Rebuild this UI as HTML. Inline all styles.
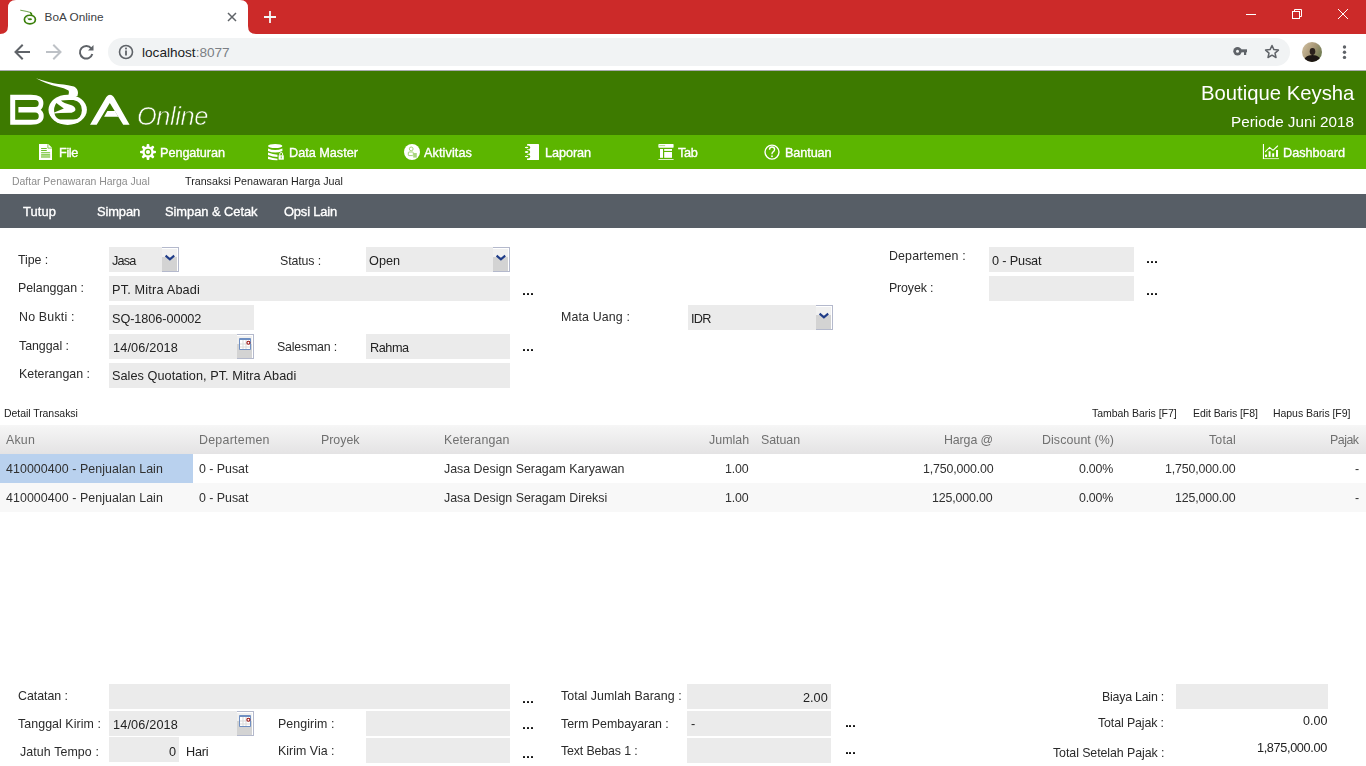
<!DOCTYPE html>
<html><head><meta charset="utf-8">
<style>
*{margin:0;padding:0;box-sizing:border-box}
html,body{width:1366px;height:766px;overflow:hidden;background:#fff;position:relative}
body{font-family:"Liberation Sans",sans-serif}
.a{position:absolute}
.t{position:absolute;white-space:nowrap;line-height:1;font-family:"Liberation Sans",sans-serif;will-change:transform}
svg{display:block}
</style></head><body>
<div class="a" style="left:0px;top:0px;width:1366px;height:34px;background:#CC2A29;"></div>
<svg class="a" style="left:0;top:0" width="290" height="34" viewBox="0 0 290 34">
<path d="M0 34 Q8 34 8 26 L8 8 Q8 0 16 0 L240 0 Q248 0 248 8 L248 26 Q248 34 256 34 Z" fill="#fff"/>
<ellipse cx="29.9" cy="19.6" rx="5.5" ry="4.35" fill="none" stroke="#3A7F0A" stroke-width="1.7"/>
<path d="M20.3 10.2 Q27 11.3 30.2 12.4 Q31.9 13.2 31.6 15.4" fill="none" stroke="#3A7F0A" stroke-width="1" opacity="0.75"/>
<path d="M30.2 12.6 Q31.9 13.3 31.6 15.6" fill="none" stroke="#3A7F0A" stroke-width="1.6"/>
<ellipse cx="30" cy="19.3" rx="2" ry="1" fill="#3A7F0A"/>
<path d="M26.5 17.3 L29 19" stroke="#3A7F0A" stroke-width="0.8" opacity="0.6"/>
<g stroke="#5F6368" stroke-width="1.5" stroke-linecap="butt"><path d="M228 13 L236 21 M236 13 L228 21"/></g>
<g stroke="#F4F8F8" stroke-width="1.8"><path d="M270 11 L270 23 M264 17 L276 17"/></g>
</svg>
<div class="t" style="left:44.60px;top:11px;font-size:11.79px;color:#3C4043;will-change:auto;">BoA Online</div>
<svg class="a" style="left:1240px;top:0" width="126" height="34">
<g stroke="#fff" stroke-width="1" fill="none">
<path d="M6 14.5 H16"/>
<rect x="52.5" y="11.5" width="7" height="7"/>
<path d="M54.5 11.5 V9.5 H61.5 V16.5 H59.5"/>
<path d="M98 9 L108 19 M108 9 L98 19"/>
</g></svg>
<div class="a" style="left:0px;top:34px;width:1366px;height:36px;background:#fff;"></div>
<div class="a" style="left:108px;top:38px;width:1182px;height:28px;background:#F1F3F4;border-radius:14px;"></div>
<svg class="a" style="left:0;top:34px" width="140" height="36">
<g stroke="#5F6368" stroke-width="2" fill="none" stroke-linecap="square">
<path d="M29 18 H17 M22 11.5 L15.5 18 L22 24.5"/>
</g>
<g stroke="#BDC1C6" stroke-width="2" fill="none" stroke-linecap="square">
<path d="M47 18 H59 M54 11.5 L60.5 18 L54 24.5"/>
</g>
<g fill="none" stroke="#5F6368" stroke-width="2">
<path d="M91.3 14.5 A6.3 6.3 0 1 0 92.3 20"/>
</g>
<path d="M93.5 11 V16.5 H88 Z" fill="#5F6368"/>
<circle cx="126" cy="18" r="6.5" fill="none" stroke="#5F6368" stroke-width="1.6"/>
<rect x="125.1" y="16.5" width="1.8" height="5" fill="#5F6368"/>
<rect x="125.1" y="13.6" width="1.8" height="1.8" fill="#5F6368"/>
</svg>
<div class="t" style="left:142.00px;top:46px;font-size:13.6px;color:#202124;will-change:auto;">localhost</div>
<div class="t" style="left:195.67px;top:46px;font-size:13.6px;color:#7B7F85;will-change:auto;">:8077</div>
<svg class="a" style="left:1225px;top:34px" width="141" height="36">
<g fill="#5F6368">
<circle cx="12.5" cy="17.3" r="4.2"/>
<rect x="15" y="15.3" width="7" height="3"/>
<rect x="19" y="17" width="2.2" height="4"/>
</g>
<circle cx="12.5" cy="17.3" r="1.5" fill="#F1F3F4"/>
<path d="M47 11.5 L48.9 15.6 L53.4 16.1 L50 19.1 L51 23.5 L47 21.2 L43 23.5 L44 19.1 L40.6 16.1 L45.1 15.6 Z" fill="none" stroke="#5F6368" stroke-width="1.5" stroke-linejoin="round"/>
<defs><linearGradient id="av" x1="0" y1="0" x2="1" y2="0.6"><stop offset="0" stop-color="#D6C4A4"/><stop offset="0.55" stop-color="#A89878"/><stop offset="1" stop-color="#6E7A50"/></linearGradient>
<clipPath id="avc"><circle cx="87" cy="18" r="10"/></clipPath></defs>
<circle cx="87" cy="18" r="10" fill="url(#av)"/>
<g clip-path="url(#avc)">
<ellipse cx="87.5" cy="17.5" rx="2.8" ry="3.4" fill="#2A201C"/>
<path d="M78 30 Q79 22.5 84 21.5 Q87.5 20.5 91 21.5 Q96 23 97 30 Z" fill="#1C1614"/>
<path d="M92 9 Q96 12 97 17 L97 8 Z" fill="#6A7450" opacity="0.8"/>
</g>
<circle cx="119.5" cy="13" r="1.7" fill="#5F6368"/>
<circle cx="119.5" cy="18.3" r="1.7" fill="#5F6368"/>
<circle cx="119.5" cy="23.4" r="1.7" fill="#5F6368"/>
</svg>
<div class="a" style="left:0px;top:70px;width:1366px;height:65px;background:#3D7A00;"></div>
<div class="a" style="left:0px;top:70px;width:1366px;height:1px;background:#A9ABAE;"></div>
<svg class="a" style="left:0;top:70px" width="140" height="65" viewBox="0 70 140 65">
<g fill="#fff" fill-rule="evenodd">
<path d="M10.2 94.7 H30.8 Q43.4 94.7 43.4 103 Q43.4 107.5 40.7 109.8 Q43.7 112 43.7 116 Q43.7 124.7 30.8 124.7 H10.2 Z M15.2 99.9 H35.2 A3.5 3.5 0 0 1 35.2 106.9 H18.4 V112.6 H35.2 A3.55 3.55 0 0 1 35.2 119.7 H15.2 Z"/>
</g>
<g fill="#fff">
<ellipse cx="67.7" cy="109.8" rx="19.2" ry="15.1"/>
<path d="M36 78.3 Q50 83 58.2 83.9 Q70 85 74 86.5 Q78 88.5 78 93 L77.5 96 L68 96 Q69.5 92 68.5 90.5 Q64 87.8 58 86.8 Q46 84 36 78.3 Z"/>
<path d="M90 124.7 L106.3 96.9 Q110 92.5 113.8 96.9 L129.6 124.7 H123.2 L109.8 102.9 L96.7 124.7 Z"/>
<path d="M104.1 116.8 L107.3 111.1 H114.9 L118.3 116.8 Z"/>
</g>
<g fill="#3D7A00">
<path d="M56.3 103 L63.8 108.4 L54.2 112.6 Q53.4 107.5 56.3 103 Z"/>
<path d="M61 100.5 Q66 99.6 73.4 100 Q82 101.5 81.9 110.3 Q81.6 119.5 73.4 119.5 L60 119.5 Q55.8 118.5 54.4 113.6 Q58 112.7 71.6 112.7 Q75.6 111.8 75.4 109.3 Q75.1 106.5 71.6 105.2 Q63 103 61 100.5 Z"/>
</g>
</svg>
<div class="t" style="left:136.60px;top:104px;font-size:25.4px;color:#fff;font-style:italic;letter-spacing:-0.403px;-webkit-text-stroke:0.6px #3D7A00;">Online</div>
<div class="t" style="left:1201.27px;top:83px;font-size:20.29px;color:#fff;">Boutique Keysha</div>
<div class="t" style="left:1231.49px;top:114px;font-size:15.28px;color:#fff;">Periode Juni 2018</div>
<div class="a" style="left:0px;top:135px;width:1366px;height:34px;background:#5CB500;"></div>
<div class="t" style="left:58.70px;top:147px;font-size:12.7px;color:#fff;letter-spacing:-0.366px;-webkit-text-stroke:0.35px currentColor;">File</div>
<div class="t" style="left:160.30px;top:147px;font-size:12.7px;color:#fff;letter-spacing:-0.066px;-webkit-text-stroke:0.35px currentColor;">Pengaturan</div>
<div class="t" style="left:288.50px;top:147px;font-size:12.7px;color:#fff;letter-spacing:-0.015px;-webkit-text-stroke:0.35px currentColor;">Data Master</div>
<div class="t" style="left:424.40px;top:147px;font-size:12.7px;color:#fff;letter-spacing:0.080px;-webkit-text-stroke:0.35px currentColor;">Aktivitas</div>
<div class="t" style="left:545.00px;top:147px;font-size:12.7px;color:#fff;letter-spacing:-0.086px;-webkit-text-stroke:0.35px currentColor;">Laporan</div>
<div class="t" style="left:678.20px;top:147px;font-size:12.7px;color:#fff;letter-spacing:-0.325px;-webkit-text-stroke:0.35px currentColor;">Tab</div>
<div class="t" style="left:785.00px;top:147px;font-size:12.7px;color:#fff;letter-spacing:-0.116px;-webkit-text-stroke:0.35px currentColor;">Bantuan</div>
<div class="t" style="left:1283.00px;top:147px;font-size:12.7px;color:#fff;letter-spacing:-0.014px;-webkit-text-stroke:0.35px currentColor;">Dashboard</div>
<svg class="a" style="left:0;top:135px" width="1366" height="34" viewBox="0 135 1366 34">
<path d="M39 144 H48.2 L52 147.8 V160 H39 Z" fill="#fff"/>
<path d="M47.9 144.2 V148.1 H51.9" fill="none" stroke="#7CC640" stroke-width="0.9"/>
<g fill="#6BBE2A">
<rect x="41" y="147.9" width="5.9" height="1.1" rx="0.5"/><rect x="41" y="150" width="5.9" height="1.1" rx="0.5"/>
<rect x="41" y="152.2" width="9.2" height="1.1" rx="0.5"/><rect x="41" y="154.3" width="9.2" height="1.1" rx="0.5"/>
</g>
<rect x="41" y="155.5" width="9.2" height="2.4" fill="#A6D87C"/>
<g transform="translate(148,152)">
<g fill="#fff">
<circle r="5.7"/>
<rect x="-1.35" y="-8" width="2.7" height="16" rx="1"/>
<rect x="-1.35" y="-8" width="2.7" height="16" rx="1" transform="rotate(45)"/>
<rect x="-1.35" y="-8" width="2.7" height="16" rx="1" transform="rotate(90)"/>
<rect x="-1.35" y="-8" width="2.7" height="16" rx="1" transform="rotate(135)"/>
</g>
<circle r="2.7" fill="none" stroke="#5CB500" stroke-width="1.3"/>
</g>
<g fill="#fff">
<ellipse cx="275.2" cy="146" rx="7.2" ry="2.1"/>
<path d="M268 148.6 Q275.2 151.6 282.4 148.6 V150.9 Q275.2 153.9 268 150.9 Z"/>
<path d="M268 152.6 Q273 154.6 277.5 154.8 V157 Q273 157 268 155 Z"/>
<path d="M268 156.6 Q273 158.6 277.5 158.8 V160.3 Q273 160.5 268 159 Z"/>
<rect x="278.6" y="155.3" width="5.2" height="4.4"/>
<path d="M279.8 155.5 V153.9 A1.4 1.4 0 0 1 282.6 153.9 V155.5" fill="none" stroke="#fff" stroke-width="1"/>
</g>
<rect x="280.7" y="156.4" width="1.1" height="2" fill="#7CC640"/>
<circle cx="412" cy="152" r="8" fill="#fff"/>
<g fill="none" stroke="#A2D374" stroke-width="1"><circle cx="411.2" cy="148.9" r="1.9"/><rect x="408.3" y="152" width="5" height="3.6" rx="0.8"/></g><rect x="413.2" y="153" width="3.6" height="4.6" fill="#A8D67F"/>
<rect x="527" y="144" width="12" height="16" rx="0.6" fill="#fff"/>
<g fill="#5CB500"><ellipse cx="527.8" cy="147.4" rx="2.4" ry="2"/><ellipse cx="527.8" cy="152" rx="2.4" ry="2"/><ellipse cx="527.8" cy="156.6" rx="2.4" ry="2"/></g>
<g fill="#fff"><ellipse cx="526.6" cy="147.4" rx="1.8" ry="0.75"/><ellipse cx="526.6" cy="152" rx="1.8" ry="0.9"/><ellipse cx="526.6" cy="156.6" rx="1.8" ry="0.75"/></g>
<g fill="#fff">
<rect x="658.4" y="144.1" width="15.2" height="3.6" rx="0.6"/>
<rect x="660" y="149" width="3" height="8.8"/>
<rect x="664.2" y="149" width="7.8" height="1.9"/>
<rect x="664.2" y="152" width="7.8" height="5.8"/>
<rect x="658.5" y="159" width="15.1" height="1" opacity="0.8"/>
</g>
<rect x="659.3" y="145.3" width="5.8" height="0.8" fill="#9CD36A"/>
<circle cx="772" cy="152.1" r="7" fill="none" stroke="#fff" stroke-width="1.4"/>
<path d="M769.5 149.8 Q769.5 147 772 147 Q774.6 147 774.6 149.6 Q774.6 151.2 772.6 152.3 Q772 152.8 772 154.2" fill="none" stroke="#fff" stroke-width="1.4"/>
<rect x="771.2" y="155.5" width="1.6" height="1.6" fill="#fff"/>
<g fill="#fff">
<rect x="1262.9" y="144" width="1.1" height="15"/><rect x="1262.9" y="158.1" width="16" height="1" opacity="0.75"/>
<rect x="1265" y="154.4" width="2.1" height="2.5" rx="0.6"/><rect x="1268.6" y="151.3" width="2" height="5.6"/><rect x="1272.2" y="153.3" width="2" height="3.6"/><rect x="1276" y="150" width="2" height="6.9"/>
</g>
<path d="M1265.4 151.6 L1269.6 147.4 L1273 150.3 L1277.6 146" fill="none" stroke="#fff" stroke-width="1.1" stroke-linecap="round"/>
</svg>
<div class="a" style="left:0px;top:169px;width:1366px;height:25px;background:#fff;"></div>
<div class="t" style="left:11.90px;top:177px;font-size:10.46px;color:#8C8C8C;">Daftar Penawaran Harga Jual</div>
<div class="t" style="left:185.30px;top:176px;font-size:10.71px;color:#1E1E1E;">Transaksi Penawaran Harga Jual</div>
<div class="a" style="left:0px;top:194px;width:1366px;height:34px;background:#575E66;"></div>
<div class="t" style="left:23.20px;top:206px;font-size:12.9px;color:#fff;letter-spacing:0.099px;-webkit-text-stroke:0.35px currentColor;">Tutup</div>
<div class="t" style="left:96.70px;top:206px;font-size:12.9px;color:#fff;letter-spacing:-0.123px;-webkit-text-stroke:0.35px currentColor;">Simpan</div>
<div class="t" style="left:165.30px;top:206px;font-size:12.9px;color:#fff;letter-spacing:-0.050px;-webkit-text-stroke:0.35px currentColor;">Simpan &amp; Cetak</div>
<div class="t" style="left:283.90px;top:206px;font-size:12.9px;color:#fff;letter-spacing:-0.166px;-webkit-text-stroke:0.35px currentColor;">Opsi Lain</div>
<div class="a" style="left:109px;top:247px;width:69px;height:25px;background:#EBEBEB;"></div>
<svg class="a" style="left:162px;top:247px" width="17" height="25" viewBox="0 0 17 25" preserveAspectRatio="none">
<rect x="0" y="0" width="17" height="25" fill="#B4B9CC"/>
<rect x="0" y="1" width="16" height="23" fill="#FFFFFF"/>
<rect x="0" y="2" width="15" height="8" fill="#F0F0F0"/>
<rect x="0" y="10" width="15" height="14" fill="#D3D3D3"/>
<path d="M3.6 8.6 L7.9 12.3 L12.2 8.6" fill="none" stroke="#1F3C88" stroke-width="2.1"/>
</svg>
<div class="t" style="left:18.30px;top:254px;font-size:12.4px;color:#2B2B2B;letter-spacing:-0.092px;">Tipe :</div>
<div class="t" style="left:112.00px;top:255px;font-size:12.7px;color:#222222;letter-spacing:-0.800px;">Jasa</div>
<div class="a" style="left:366px;top:247px;width:144px;height:25px;background:#EBEBEB;"></div>
<svg class="a" style="left:493px;top:247px" width="17" height="25" viewBox="0 0 17 25" preserveAspectRatio="none">
<rect x="0" y="0" width="17" height="25" fill="#B4B9CC"/>
<rect x="0" y="1" width="16" height="23" fill="#FFFFFF"/>
<rect x="0" y="2" width="15" height="8" fill="#F0F0F0"/>
<rect x="0" y="10" width="15" height="14" fill="#D3D3D3"/>
<path d="M3.6 8.6 L7.9 12.3 L12.2 8.6" fill="none" stroke="#1F3C88" stroke-width="2.1"/>
</svg>
<div class="t" style="left:280.00px;top:255px;font-size:12.4px;color:#2B2B2B;letter-spacing:-0.130px;">Status :</div>
<div class="t" style="left:369.20px;top:255px;font-size:12.7px;color:#222222;letter-spacing:0.034px;">Open</div>
<div class="a" style="left:109px;top:276px;width:401px;height:25px;background:#EBEBEB;"></div>
<div class="t" style="left:18.30px;top:282px;font-size:12.4px;color:#2B2B2B;letter-spacing:-0.026px;">Pelanggan :</div>
<div class="t" style="left:111.80px;top:284px;font-size:12.7px;color:#222222;letter-spacing:0.186px;">PT. Mitra Abadi</div>
<div class="a" style="left:523.4px;top:293px;width:2px;height:2px;background:#111;border-radius:0.6px;"></div>
<div class="a" style="left:527.0px;top:293px;width:2px;height:2px;background:#111;border-radius:0.6px;"></div>
<div class="a" style="left:530.6px;top:293px;width:2px;height:2px;background:#111;border-radius:0.6px;"></div>
<div class="a" style="left:109px;top:305px;width:145px;height:25px;background:#EBEBEB;"></div>
<div class="t" style="left:18.50px;top:311px;font-size:12.4px;color:#2B2B2B;letter-spacing:0.195px;">No Bukti :</div>
<div class="t" style="left:112.30px;top:313px;font-size:12.7px;color:#222222;letter-spacing:-0.074px;">SQ-1806-00002</div>
<div class="a" style="left:109px;top:334px;width:145px;height:25px;background:#EBEBEB;"></div>
<svg class="a" style="left:237px;top:334px" width="17" height="25" viewBox="0 0 17 25">
<rect x="0" y="0" width="17" height="25" fill="#B4B9CC"/>
<rect x="0" y="1" width="16" height="23" fill="#FFFFFF"/>
<rect x="0" y="2" width="15" height="8" fill="#F0F0F0"/>
<rect x="0" y="10" width="15" height="14" fill="#D3D3D3"/>
<rect x="2" y="4" width="12" height="12" fill="#6F8FC2" rx="1"/>
<rect x="3" y="6" width="10" height="9" fill="#FFFFFF"/>
<g fill="#DADADA"><rect x="5.5" y="6" width="1" height="9"/><rect x="8.5" y="6" width="1" height="9"/><rect x="3" y="9.5" width="10" height="1"/><rect x="3" y="12.5" width="10" height="1"/></g>
<circle cx="11.4" cy="8.8" r="1.5" fill="#fff" stroke="#9A1010" stroke-width="1.1"/>
</svg>
<div class="t" style="left:18.50px;top:340px;font-size:12.4px;color:#2B2B2B;letter-spacing:-0.036px;">Tanggal :</div>
<div class="t" style="left:112.90px;top:342px;font-size:12.7px;color:#222222;letter-spacing:0.154px;">14/06/2018</div>
<div class="a" style="left:366px;top:334px;width:144px;height:25px;background:#EBEBEB;"></div>
<div class="t" style="left:277.30px;top:341px;font-size:12.4px;color:#2B2B2B;letter-spacing:-0.203px;">Salesman :</div>
<div class="t" style="left:369.50px;top:342px;font-size:12.7px;color:#222222;letter-spacing:-0.448px;">Rahma</div>
<div class="a" style="left:523.4px;top:349px;width:2px;height:2px;background:#111;border-radius:0.6px;"></div>
<div class="a" style="left:527.0px;top:349px;width:2px;height:2px;background:#111;border-radius:0.6px;"></div>
<div class="a" style="left:530.6px;top:349px;width:2px;height:2px;background:#111;border-radius:0.6px;"></div>
<div class="a" style="left:109px;top:363px;width:401px;height:25px;background:#EBEBEB;"></div>
<div class="t" style="left:18.50px;top:368px;font-size:12.4px;color:#2B2B2B;">Keterangan :</div>
<div class="t" style="left:111.80px;top:370px;font-size:12.7px;color:#222222;letter-spacing:0.052px;">Sales Quotation, PT. Mitra Abadi</div>
<div class="a" style="left:688px;top:305px;width:145px;height:25px;background:#EBEBEB;"></div>
<svg class="a" style="left:816px;top:305px" width="17" height="25" viewBox="0 0 17 25" preserveAspectRatio="none">
<rect x="0" y="0" width="17" height="25" fill="#B4B9CC"/>
<rect x="0" y="1" width="16" height="23" fill="#FFFFFF"/>
<rect x="0" y="2" width="15" height="8" fill="#F0F0F0"/>
<rect x="0" y="10" width="15" height="14" fill="#D3D3D3"/>
<path d="M3.6 8.6 L7.9 12.3 L12.2 8.6" fill="none" stroke="#1F3C88" stroke-width="2.1"/>
</svg>
<div class="t" style="left:560.50px;top:311px;font-size:12.4px;color:#2B2B2B;letter-spacing:0.133px;">Mata Uang :</div>
<div class="t" style="left:691.20px;top:313px;font-size:12.7px;color:#222222;letter-spacing:-0.691px;">IDR</div>
<div class="a" style="left:989px;top:247px;width:145px;height:25px;background:#EBEBEB;"></div>
<div class="t" style="left:888.70px;top:250px;font-size:12.4px;color:#2B2B2B;letter-spacing:0.140px;">Departemen :</div>
<div class="t" style="left:992.30px;top:255px;font-size:12.7px;color:#222222;letter-spacing:-0.158px;">0 - Pusat</div>
<div class="a" style="left:1147.4px;top:261px;width:2px;height:2px;background:#111;border-radius:0.6px;"></div>
<div class="a" style="left:1151.0px;top:261px;width:2px;height:2px;background:#111;border-radius:0.6px;"></div>
<div class="a" style="left:1154.6px;top:261px;width:2px;height:2px;background:#111;border-radius:0.6px;"></div>
<div class="a" style="left:989px;top:276px;width:145px;height:25px;background:#EBEBEB;"></div>
<div class="t" style="left:888.70px;top:282px;font-size:12.4px;color:#2B2B2B;letter-spacing:-0.148px;">Proyek :</div>
<div class="a" style="left:1147.4px;top:293px;width:2px;height:2px;background:#111;border-radius:0.6px;"></div>
<div class="a" style="left:1151.0px;top:293px;width:2px;height:2px;background:#111;border-radius:0.6px;"></div>
<div class="a" style="left:1154.6px;top:293px;width:2px;height:2px;background:#111;border-radius:0.6px;"></div>
<div class="t" style="left:3.50px;top:408px;font-size:10.5px;color:#222;letter-spacing:-0.056px;">Detail Transaksi</div>
<div class="t" style="left:1092.40px;top:408px;font-size:10.5px;color:#222;letter-spacing:-0.035px;">Tambah Baris [F7]</div>
<div class="t" style="left:1193.00px;top:408px;font-size:10.5px;color:#222;letter-spacing:-0.076px;">Edit Baris [F8]</div>
<div class="t" style="left:1273.00px;top:408px;font-size:10.5px;color:#222;letter-spacing:-0.056px;">Hapus Baris [F9]</div>
<div class="a" style="left:0px;top:425px;width:1366px;height:29px;background:linear-gradient(#F6F6F6,#E4E3E4);"></div>
<div class="t" style="left:6.10px;top:434px;font-size:12.4px;color:#707070;letter-spacing:0.184px;">Akun</div>
<div class="t" style="left:199.40px;top:434px;font-size:12.4px;color:#707070;letter-spacing:0.257px;">Departemen</div>
<div class="t" style="left:321.20px;top:434px;font-size:12.4px;color:#707070;letter-spacing:-0.015px;">Proyek</div>
<div class="t" style="left:443.80px;top:434px;font-size:12.4px;color:#707070;letter-spacing:0.149px;">Keterangan</div>
<div class="t" style="left:708.95px;top:434px;font-size:12.4px;color:#707070;letter-spacing:0.038px;">Jumlah</div>
<div class="t" style="left:760.80px;top:434px;font-size:12.4px;color:#707070;letter-spacing:-0.050px;">Satuan</div>
<div class="t" style="left:943.98px;top:434px;font-size:12.4px;color:#707070;letter-spacing:-0.115px;">Harga @</div>
<div class="t" style="left:1041.77px;top:434px;font-size:12.4px;color:#707070;letter-spacing:0.086px;">Discount (%)</div>
<div class="t" style="left:1208.86px;top:434px;font-size:12.4px;color:#707070;letter-spacing:0.162px;">Total</div>
<div class="t" style="left:1330.45px;top:434px;font-size:12.4px;color:#707070;letter-spacing:-0.503px;">Pajak</div>
<div class="a" style="left:0px;top:454px;width:1366px;height:29px;background:#FFFFFF;"></div>
<div class="a" style="left:0px;top:454px;width:193px;height:29px;background:#B9D1EE;"></div>
<div class="a" style="left:0px;top:483px;width:1366px;height:29px;background:#F8F8F8;"></div>
<div class="t" style="left:6.10px;top:463px;font-size:12.4px;color:#303030;letter-spacing:0.072px;">410000400 - Penjualan Lain</div>
<div class="t" style="left:199.40px;top:463px;font-size:12.4px;color:#303030;letter-spacing:-0.025px;">0 - Pusat</div>
<div class="t" style="left:443.80px;top:463px;font-size:12.4px;color:#303030;">Jasa Design Seragam Karyawan</div>
<div class="t" style="left:725.43px;top:463px;font-size:12.4px;color:#303030;letter-spacing:-0.158px;">1.00</div>
<div class="t" style="left:922.52px;top:463px;font-size:12.4px;color:#303030;letter-spacing:-0.166px;">1,750,000.00</div>
<div class="t" style="left:1079.48px;top:463px;font-size:12.4px;color:#303030;letter-spacing:-0.232px;">0.00%</div>
<div class="t" style="left:1165.12px;top:463px;font-size:12.4px;color:#303030;letter-spacing:-0.166px;">1,750,000.00</div>
<div class="t" style="left:1355.38px;top:463px;font-size:12.4px;color:#303030;">-</div>
<div class="t" style="left:6.10px;top:492px;font-size:12.4px;color:#303030;letter-spacing:0.072px;">410000400 - Penjualan Lain</div>
<div class="t" style="left:199.40px;top:492px;font-size:12.4px;color:#303030;letter-spacing:-0.025px;">0 - Pusat</div>
<div class="t" style="left:443.80px;top:492px;font-size:12.4px;color:#303030;">Jasa Design Seragam Direksi</div>
<div class="t" style="left:725.43px;top:492px;font-size:12.4px;color:#303030;letter-spacing:-0.158px;">1.00</div>
<div class="t" style="left:932.45px;top:492px;font-size:12.4px;color:#303030;letter-spacing:-0.155px;">125,000.00</div>
<div class="t" style="left:1079.48px;top:492px;font-size:12.4px;color:#303030;letter-spacing:-0.232px;">0.00%</div>
<div class="t" style="left:1175.05px;top:492px;font-size:12.4px;color:#303030;letter-spacing:-0.155px;">125,000.00</div>
<div class="t" style="left:1355.38px;top:492px;font-size:12.4px;color:#303030;">-</div>
<div class="a" style="left:109px;top:684px;width:401px;height:25px;background:#EBEBEB;"></div>
<div class="t" style="left:18.40px;top:690px;font-size:12.4px;color:#2B2B2B;letter-spacing:-0.046px;">Catatan :</div>
<div class="a" style="left:523.4px;top:701px;width:2px;height:2px;background:#111;border-radius:0.6px;"></div>
<div class="a" style="left:527.0px;top:701px;width:2px;height:2px;background:#111;border-radius:0.6px;"></div>
<div class="a" style="left:530.6px;top:701px;width:2px;height:2px;background:#111;border-radius:0.6px;"></div>
<div class="a" style="left:109px;top:711px;width:145px;height:25px;background:#EBEBEB;"></div>
<svg class="a" style="left:237px;top:711px" width="17" height="25" viewBox="0 0 17 25">
<rect x="0" y="0" width="17" height="25" fill="#B4B9CC"/>
<rect x="0" y="1" width="16" height="23" fill="#FFFFFF"/>
<rect x="0" y="2" width="15" height="8" fill="#F0F0F0"/>
<rect x="0" y="10" width="15" height="14" fill="#D3D3D3"/>
<rect x="2" y="4" width="12" height="12" fill="#6F8FC2" rx="1"/>
<rect x="3" y="6" width="10" height="9" fill="#FFFFFF"/>
<g fill="#DADADA"><rect x="5.5" y="6" width="1" height="9"/><rect x="8.5" y="6" width="1" height="9"/><rect x="3" y="9.5" width="10" height="1"/><rect x="3" y="12.5" width="10" height="1"/></g>
<circle cx="11.4" cy="8.8" r="1.5" fill="#fff" stroke="#9A1010" stroke-width="1.1"/>
</svg>
<div class="t" style="left:18.40px;top:718px;font-size:12.4px;color:#2B2B2B;letter-spacing:0.066px;">Tanggal Kirim :</div>
<div class="t" style="left:113.30px;top:719px;font-size:12.7px;color:#222222;letter-spacing:0.154px;">14/06/2018</div>
<div class="a" style="left:366px;top:711px;width:144px;height:25px;background:#EBEBEB;"></div>
<div class="t" style="left:277.60px;top:718px;font-size:12.4px;color:#2B2B2B;letter-spacing:0.078px;">Pengirim :</div>
<div class="a" style="left:523.4px;top:727px;width:2px;height:2px;background:#111;border-radius:0.6px;"></div>
<div class="a" style="left:527.0px;top:727px;width:2px;height:2px;background:#111;border-radius:0.6px;"></div>
<div class="a" style="left:530.6px;top:727px;width:2px;height:2px;background:#111;border-radius:0.6px;"></div>
<div class="a" style="left:109px;top:737px;width:70px;height:25px;background:#EBEBEB;"></div>
<div class="t" style="left:20.00px;top:746px;font-size:12.4px;color:#2B2B2B;letter-spacing:0.103px;">Jatuh Tempo :</div>
<div class="t" style="left:168.95px;top:746px;font-size:12.7px;color:#222222;">0</div>
<div class="t" style="left:185.50px;top:746px;font-size:12.7px;color:#222222;letter-spacing:-0.196px;">Hari</div>
<div class="a" style="left:366px;top:738px;width:144px;height:25px;background:#EBEBEB;"></div>
<div class="t" style="left:277.60px;top:745px;font-size:12.4px;color:#2B2B2B;letter-spacing:0.030px;">Kirim Via :</div>
<div class="a" style="left:523.4px;top:756px;width:2px;height:2px;background:#111;border-radius:0.6px;"></div>
<div class="a" style="left:527.0px;top:756px;width:2px;height:2px;background:#111;border-radius:0.6px;"></div>
<div class="a" style="left:530.6px;top:756px;width:2px;height:2px;background:#111;border-radius:0.6px;"></div>
<div class="a" style="left:687px;top:684px;width:144px;height:25px;background:#EBEBEB;"></div>
<div class="t" style="left:560.50px;top:690px;font-size:12.4px;color:#2B2B2B;letter-spacing:0.037px;">Total Jumlah Barang :</div>
<div class="t" style="left:803.27px;top:692px;font-size:12.7px;color:#222222;">2.00</div>
<div class="a" style="left:687px;top:711px;width:144px;height:25px;background:#EBEBEB;"></div>
<div class="t" style="left:560.50px;top:718px;font-size:12.4px;color:#2B2B2B;letter-spacing:-0.023px;">Term Pembayaran :</div>
<div class="t" style="left:691.00px;top:718px;font-size:12.7px;color:#222222;">-</div>
<div class="a" style="left:845.6px;top:725px;width:2px;height:2px;background:#111;border-radius:0.6px;"></div>
<div class="a" style="left:849.2px;top:725px;width:2px;height:2px;background:#111;border-radius:0.6px;"></div>
<div class="a" style="left:852.8px;top:725px;width:2px;height:2px;background:#111;border-radius:0.6px;"></div>
<div class="a" style="left:687px;top:738px;width:144px;height:25px;background:#EBEBEB;"></div>
<div class="t" style="left:560.50px;top:745px;font-size:12.4px;color:#2B2B2B;letter-spacing:-0.141px;">Text Bebas 1 :</div>
<div class="a" style="left:845.6px;top:752px;width:2px;height:2px;background:#111;border-radius:0.6px;"></div>
<div class="a" style="left:849.2px;top:752px;width:2px;height:2px;background:#111;border-radius:0.6px;"></div>
<div class="a" style="left:852.8px;top:752px;width:2px;height:2px;background:#111;border-radius:0.6px;"></div>
<div class="a" style="left:1176px;top:684px;width:152px;height:25px;background:#EBEBEB;"></div>
<div class="t" style="left:1102.38px;top:691px;font-size:12.4px;color:#2B2B2B;letter-spacing:-0.233px;">Biaya Lain :</div>
<div class="t" style="left:1098.48px;top:717px;font-size:12.4px;color:#2B2B2B;letter-spacing:-0.119px;">Total Pajak :</div>
<div class="t" style="left:1053.02px;top:747px;font-size:12.4px;color:#2B2B2B;letter-spacing:-0.073px;">Total Setelah Pajak :</div>
<div class="t" style="left:1303.26px;top:715px;font-size:12.5px;color:#222222;">0.00</div>
<div class="t" style="left:1257.33px;top:742px;font-size:12.7px;color:#222222;letter-spacing:-0.354px;">1,875,000.00</div>
</body></html>
